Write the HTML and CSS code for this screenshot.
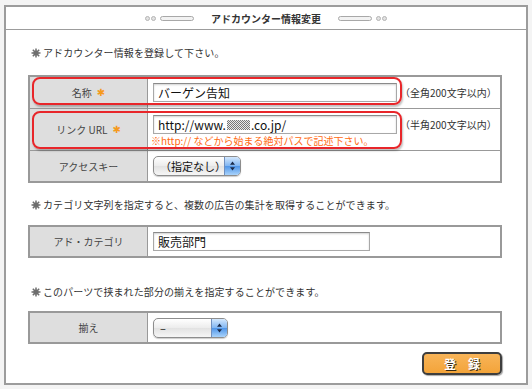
FILE: index.html
```html
<!DOCTYPE html>
<html lang="ja">
<head>
    <meta charset="UTF-8">
    <title>アドカウンター情報変更</title>
    <link rel="stylesheet" href="styles.css">
</head>
<body>

    <div class="panel">
        <!-- Title bar -->
        <div class="panel-head">
            <span class="deco"><i class="dot"></i><i class="dot"></i><i class="bar"></i></span>
            <h1>アドカウンター情報変更</h1>
            <span class="deco"><i class="bar"></i><i class="dot"></i><i class="dot"></i></span>
        </div>

        <div class="panel-body">
            <p class="note note-first"><svg class="mark" width="10" height="10" viewBox="0 0 10 10"><path d="M5 0.5V9.5M0.5 5H9.5M1.8 1.8L8.2 8.2M8.2 1.8L1.8 8.2" stroke="#6e6e6e" stroke-width="1.5"/><circle cx="5" cy="5" r="2.6" fill="#6e6e6e"/></svg>アドカウンター情報を登録して下さい。</p>

            <!-- Basic info -->
            <div class="form-wrap">
                <div class="form-table">
                    <div class="row row-name">
                        <div class="label">名称<span class="req">✱</span></div>
                        <div class="value">
                            <input class="text text-long" type="text" value="バーゲン告知">
                            <span class="limit">（全角200文字以内）</span>
                        </div>
                    </div>
                    <div class="row row-url">
                        <div class="label">リンク URL<span class="req">✱</span></div>
                        <div class="value value-stack">
                            <div class="line">
                                <div class="text text-long url">http://www.<span class="mosaic"></span>.co.jp/</div>
                                <span class="limit">（半角200文字以内）</span>
                            </div>
                            <p class="hint">※http:// などから始まる絶対パスで記述下さい。</p>
                        </div>
                    </div>
                    <div class="row row-key">
                        <div class="label">アクセスキー</div>
                        <div class="value">
                            <div class="select select-key">
                                <span class="select-text">（指定なし）</span>
                                <span class="select-btn">
                                    <svg width="7" height="10" viewBox="0 0 7 10"><path d="M3.5 0.5 L6 3.8 L1 3.8 Z M3.5 9.5 L6 6.2 L1 6.2 Z" fill="#1b2b4a"/></svg>
                                </span>
                            </div>
                        </div>
                    </div>
                </div>
                <div class="hl hl-name"></div>
                <div class="hl hl-url"></div>
            </div>

            <!-- Category -->
            <p class="note"><svg class="mark" width="10" height="10" viewBox="0 0 10 10"><path d="M5 0.5V9.5M0.5 5H9.5M1.8 1.8L8.2 8.2M8.2 1.8L1.8 8.2" stroke="#6e6e6e" stroke-width="1.5"/><circle cx="5" cy="5" r="2.6" fill="#6e6e6e"/></svg>カテゴリ文字列を指定すると、複数の広告の集計を取得することができます。</p>
            <div class="form-table">
                <div class="row row-cat">
                    <div class="label">アド・カテゴリ</div>
                    <div class="value">
                        <input class="text text-cat" type="text" value="販売部門">
                    </div>
                </div>
            </div>

            <!-- Alignment -->
            <p class="note note-last"><svg class="mark" width="10" height="10" viewBox="0 0 10 10"><path d="M5 0.5V9.5M0.5 5H9.5M1.8 1.8L8.2 8.2M8.2 1.8L1.8 8.2" stroke="#6e6e6e" stroke-width="1.5"/><circle cx="5" cy="5" r="2.6" fill="#6e6e6e"/></svg>このパーツで挟まれた部分の揃えを指定することができます。</p>
            <div class="form-table">
                <div class="row row-align">
                    <div class="label">揃え</div>
                    <div class="value">
                        <div class="select select-align">
                            <span class="select-text">–</span>
                            <span class="select-btn">
                                <svg width="7" height="10" viewBox="0 0 7 10"><path d="M3.5 0.5 L6 3.8 L1 3.8 Z M3.5 9.5 L6 6.2 L1 6.2 Z" fill="#1b2b4a"/></svg>
                            </span>
                        </div>
                    </div>
                </div>
            </div>

            <div class="actions">
                <button class="btn-submit">登　録</button>
            </div>
        </div>
    </div>

</body>
</html>
```

FILE: styles.css
```css
* {
    box-sizing: border-box;
}

body {
    margin: 0;
    padding: 5px 4px 0;
    background-color: #f4f4f4;
    font-family: "Noto Sans CJK JP", sans-serif;
    font-size: 10px;
    color: #333;
}

.panel {
    width: 524px;
    height: 380px;
    border: 2px solid #9c9c9c;
    background-color: #fff;
}

/* title bar */
.panel-head {
    height: 23px;
    border-bottom: 1px solid #9c9c9c;
    display: flex;
    justify-content: center;
    align-items: center;
    gap: 14px;
}

.panel-head h1 {
    margin: 0;
    font-size: 10px;
    font-weight: bold;
    color: #333;
}

.deco {
    display: flex;
    align-items: center;
    gap: 1px;
}

.dot {
    width: 5px;
    height: 5px;
    border-radius: 50%;
    border: 1px solid #b4b4b4;
    background-color: #e2e2e2;
}

.bar {
    width: 34px;
    height: 5px;
    margin: 0 3px;
    border-radius: 3px;
    border: 1px solid #a8a8a8;
    background-color: #f2f2f2;
}

.panel-body {
    padding: 0 24px 0 22px;
}

/* notes */
.note {
    margin: 15px 0 13px;
    padding-left: 3px;
    line-height: 14px;
    display: flex;
    align-items: center;
    letter-spacing: 0.1px;
}

.note-first {
    margin: 16px 0 15px;
}

.note-last {
    margin: 27px 0 12px;
}

.mark {
    margin-right: 2px;
    flex-shrink: 0;
}

/* form tables */
.form-wrap {
    position: relative;
}

.form-table {
    border: 2px solid #999;
}

.row {
    display: grid;
    grid-template-columns: 118px 1fr;
}

.row + .row {
    border-top: 1px solid #999;
}

.row-name { height: 31px; }
.row-url { height: 42px; }
.row-key { height: 31px; }
.row-cat { height: 29px; }
.row-align { height: 29px; }

.label {
    background-color: #dedede;
    border-right: 1px solid #999;
    display: flex;
    justify-content: center;
    align-items: center;
    color: #444;
}

.req {
    font-family: "DejaVu Sans", sans-serif;
    font-size: 10px;
    color: #f59a1c;
    margin-left: 5px;
}

.value {
    padding-left: 5px;
    display: flex;
    align-items: center;
}

.value-stack {
    flex-direction: column;
    align-items: flex-start;
    padding-top: 6px;
}

.line {
    display: flex;
    align-items: center;
}

.text {
    height: 19px;
    margin: 0;
    padding: 0 4px;
    border: 1px solid #a8a8a8;
    border-top-color: #8a8a8a;
    box-shadow: inset 0 1px 2px rgba(0, 0, 0, 0.18);
    font-family: "Noto Sans CJK JP", sans-serif;
    font-size: 12px;
    color: #111;
    background-color: #fff;
    outline: none;
}

.text-long {
    width: 244px;
}

.text-cat {
    width: 217px;
}

.url {
    display: flex;
    align-items: center;
    line-height: 17px;
}

.mosaic {
    display: inline-block;
    width: 23px;
    height: 10px;
    margin: 0 1px;
    background: repeating-conic-gradient(#555 0 25%, #e4e4e4 0 50%) 0 0 / 2px 2px;
    opacity: 0.8;
}

.limit {
    margin-left: 3px;
    color: #333;
}

.hint {
    margin: 0 0 0 -2px;
    line-height: 14px;
    color: #ff6a10;
}

/* aqua style pop-up */
.select {
    display: flex;
    height: 20px;
    border: 1px solid #8d8d8d;
    border-radius: 5px;
    overflow: hidden;
    background: linear-gradient(#ffffff, #ececec 50%, #e2e2e2 51%, #f6f6f6);
    box-shadow: 0 1px 1px rgba(0, 0, 0, 0.2);
}

.select-key {
    width: 88px;
}

.select-align {
    width: 75px;
}

.select-text {
    flex: 1;
    padding-left: 6px;
    line-height: 18px;
    font-size: 11px;
    color: #111;
}

.select-btn {
    width: 16px;
    border-left: 1px solid #6f8fbf;
    background: linear-gradient(#d4e8fd, #7eb4f2 50%, #4f95e8 51%, #a9d3fb);
    display: flex;
    justify-content: center;
    align-items: center;
}

/* submit */
.actions {
    display: flex;
    justify-content: flex-end;
    margin-top: 8px;
}

.btn-submit {
    width: 80px;
    height: 23px;
    padding: 0;
    border: 2px solid #3e3e3e;
    border-radius: 5px;
    background: linear-gradient(#f8b458, #f3a43a);
    box-shadow: 1px 1px 1px rgba(0, 0, 0, 0.35);
    font-family: "Noto Sans CJK JP", sans-serif;
    font-size: 12px;
    font-weight: bold;
    color: #fff;
    text-shadow: 1px 1px 0 #3a2a10;
    cursor: pointer;
}

/* red highlight marks drawn over the form */
.hl {
    position: absolute;
    left: 4px;
    width: 370px;
    border: 2px solid #e8262a;
    border-radius: 8px;
    box-shadow: 1px 2px 2px rgba(0, 0, 0, 0.25);
}

.hl-name {
    top: 2px;
    height: 28px;
}

.hl-url {
    top: 36px;
    height: 38px;
}
```
